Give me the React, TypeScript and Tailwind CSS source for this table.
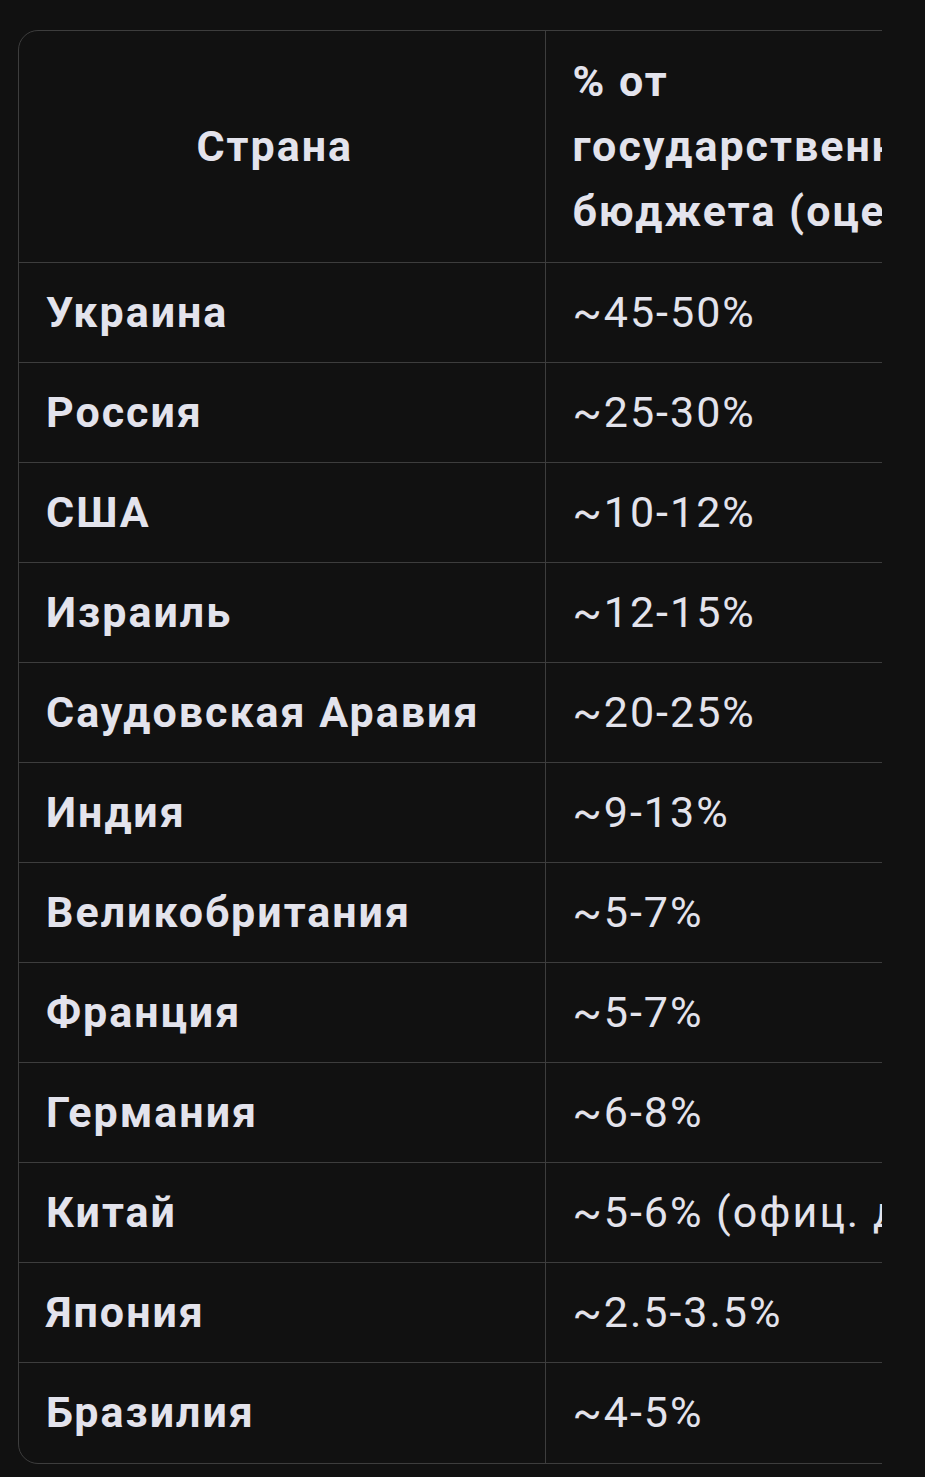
const rows: [string, string][] = [
  ["Украина", "~45-50%"],
  ["Россия", "~25-30%"],
  ["США", "~10-12%"],
  ["Израиль", "~12-15%"],
  ["Саудовская Аравия", "~20-25%"],
  ["Индия", "~9-13%"],
  ["Великобритания", "~5-7%"],
  ["Франция", "~5-7%"],
  ["Германия", "~6-8%"],
  ["Китай", "~5-6% (офиц. данные)"],
  ["Япония", "~2.5-3.5%"],
  ["Бразилия", "~4-5%"],
];

export default function App() {
  return (
    <div
      className="min-h-screen bg-[#111111] pt-[30px] pl-[18px] text-[#e3e3ec]"
      style={{ fontFamily: "Roboto, 'Noto Sans', sans-serif" }}
    >
      <div className="w-[864px] overflow-hidden">
        <div className="w-max rounded-[20px] border border-[#3d3d3d] overflow-hidden">
          <table className="border-collapse text-[43px] leading-[65px] tracking-[2px]">
            <thead>
              <tr>
                <th className="w-[526px] pl-[27px] pr-[41px] py-[18px] text-center font-bold align-middle">
                  Страна
                </th>
                <th className="w-[540px] border-l border-[#3d3d3d] px-[27px] py-[18px] text-left font-bold align-middle">
                  % от государственного бюджета (оценка)
                </th>
              </tr>
            </thead>
            <tbody>
              {rows.map(([country, share]) => (
                <tr key={country} className="border-t border-[#3d3d3d]">
                  <td className="h-[100px] px-[27px] py-0 font-bold whitespace-nowrap">
                    {country}
                  </td>
                  <td className="h-[100px] border-l border-[#3d3d3d] px-[27px] py-0 whitespace-nowrap">
                    {share}
                  </td>
                </tr>
              ))}
            </tbody>
          </table>
        </div>
      </div>
    </div>
  );
}
